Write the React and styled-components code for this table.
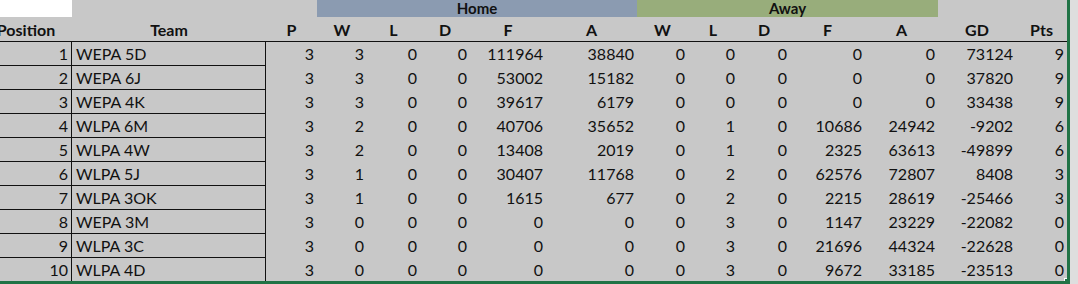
import React from "react";
import styled, { createGlobalStyle } from "styled-components";

const GlobalStyle = createGlobalStyle`
  html, body {
    margin: 0;
    padding: 0;
    background: #dedede;
  }
  body {
    font-family: Lato, "Liberation Sans", sans-serif;
    color: #111;
  }
`;

const COLS = "92px 194px 51px 50px 53px 50px 76px 91px 51px 50px 52px 75px 73px 78px 51px";

const Sheet = styled.div`
  width: 1067px;
  height: 281px;
  overflow: hidden;
  background: #c8c8c8;
  border-right: 3px solid #217346;
  border-bottom: 3px solid #217346;
  position: relative;
`;

const Table = styled.div`
  margin-left: -20px;
  width: 1087px;
`;

const Row = styled.div`
  display: grid;
  grid-template-columns: ${COLS};
  height: ${(p) => p.$h}px;
`;

const BandRow = styled(Row)`
  grid-template-columns: 92px 245px 320px 301px 129px;
`;

const Band = styled.div`
  background: ${(p) => p.$bg || "transparent"};
  height: 17px;
  font-weight: 700;
  font-size: 15px;
  line-height: 16px;
  text-align: center;
`;

const HeadRow = styled(Row)`
  border-bottom: 1px solid #111;
`;

const Head = styled.div`
  font-weight: 700;
  font-size: 16px;
  line-height: 23px;
  text-align: center;
  white-space: nowrap;
`;

const Cell = styled.div`
  font-size: 16px;
  line-height: 23px;
  height: 24px;
  box-sizing: border-box;
  white-space: nowrap;
  text-align: ${(p) => (p.$left ? "left" : "right")};
  padding: ${(p) => (p.$left ? "0 0 0 4px" : "0 3px 0 0")};
  border-bottom: ${(p) => (p.$boxed ? "1px solid #111" : "none")};
  border-right: ${(p) => (p.$boxed ? "1px solid #111" : "none")};
`;

const Handle = styled.div`
  position: absolute;
  right: -4px;
  bottom: -4px;
  width: 5px;
  height: 5px;
  background: #217346;
  border: 1px solid #fff;
`;

const headers = ["Position", "Team", "P", "W", "L", "D", "F", "A", "W", "L", "D", "F", "A", "GD", "Pts"];

const rows = [
  [1, "WEPA 5D", 3, 3, 0, 0, 111964, 38840, 0, 0, 0, 0, 0, 73124, 9],
  [2, "WEPA 6J", 3, 3, 0, 0, 53002, 15182, 0, 0, 0, 0, 0, 37820, 9],
  [3, "WEPA 4K", 3, 3, 0, 0, 39617, 6179, 0, 0, 0, 0, 0, 33438, 9],
  [4, "WLPA 6M", 3, 2, 0, 0, 40706, 35652, 0, 1, 0, 10686, 24942, -9202, 6],
  [5, "WLPA 4W", 3, 2, 0, 0, 13408, 2019, 0, 1, 0, 2325, 63613, -49899, 6],
  [6, "WLPA 5J", 3, 1, 0, 0, 30407, 11768, 0, 2, 0, 62576, 72807, 8408, 3],
  [7, "WLPA 3OK", 3, 1, 0, 0, 1615, 677, 0, 2, 0, 2215, 28619, -25466, 3],
  [8, "WEPA 3M", 3, 0, 0, 0, 0, 0, 0, 3, 0, 1147, 23229, -22082, 0],
  [9, "WLPA 3C", 3, 0, 0, 0, 0, 0, 0, 3, 0, 21696, 44324, -22628, 0],
  [10, "WLPA 4D", 3, 0, 0, 0, 0, 0, 0, 3, 0, 9672, 33185, -23513, 0],
];

export default function App() {
  return (
    <>
      <GlobalStyle />
      <Sheet>
        <Table>
          <BandRow $h={18}>
            <Band $bg="#ffffff" />
            <Band />
            <Band $bg="#8b9bb1">Home</Band>
            <Band $bg="#98ad7b">Away</Band>
            <Band />
          </BandRow>
          <HeadRow $h={23}>
            {headers.map((h, i) => (
              <Head key={i}>{h}</Head>
            ))}
          </HeadRow>
          {rows.map((r) => (
            <Row key={r[0]} $h={24}>
              {r.map((v, i) => (
                <Cell key={i} $left={i === 1} $boxed={i < 2}>
                  {v}
                </Cell>
              ))}
            </Row>
          ))}
        </Table>
        <Handle />
      </Sheet>
    </>
  );
}
